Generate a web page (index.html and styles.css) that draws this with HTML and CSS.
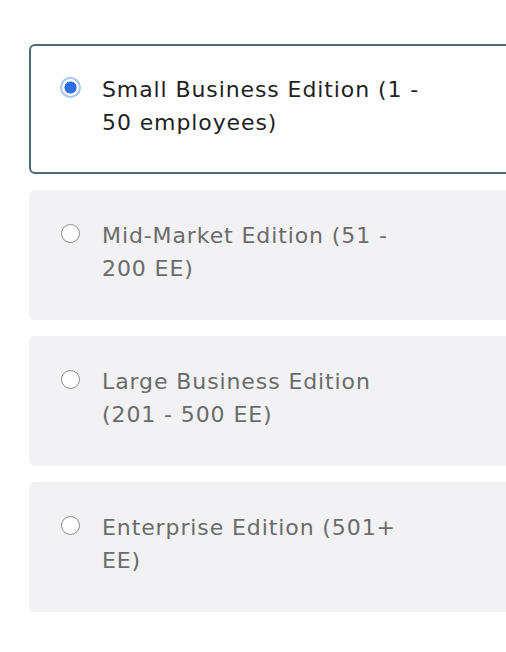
FILE: index.html
```html
<!DOCTYPE html>
<html lang="en">
<head>
<meta charset="utf-8">
<title>Edition</title>
<link rel="stylesheet" href="styles.css">
</head>
<body>
<div class="options">
  <label class="option option--selected">
    <input type="radio" name="edition" class="radio" checked>
    <span class="option__text">Small Business Edition (1 - 50 employees)</span>
  </label>
  <label class="option">
    <input type="radio" name="edition" class="radio">
    <span class="option__text">Mid-Market Edition (51 - 200 EE)</span>
  </label>
  <label class="option">
    <input type="radio" name="edition" class="radio">
    <span class="option__text">Large Business Edition (201 - 500 EE)</span>
  </label>
  <label class="option">
    <input type="radio" name="edition" class="radio">
    <span class="option__text">Enterprise Edition (501+ EE)</span>
  </label>
</div>
</body>
</html>
```

FILE: styles.css
```css
html, body {
  margin: 0;
  padding: 0;
  background: #ffffff;
  overflow: hidden;
}

body {
  font-family: "DejaVu Sans", "Open Sans", sans-serif;
}

.options {
  display: flex;
  flex-direction: column;
  gap: 16px;
  padding: 44px 0 0 29px;
}

.option {
  box-sizing: border-box;
  width: 620px;
  height: 130px;
  display: flex;
  align-items: flex-start;
  gap: 22px;
  padding: 27px 0 0 30px;
  border: 2px solid transparent;
  border-radius: 6px;
  background: #f2f2f4;
  cursor: pointer;
}

.option--selected {
  background: #ffffff;
  border-color: #4c6a7a;
}

.radio {
  appearance: none;
  -webkit-appearance: none;
  box-sizing: border-box;
  flex: none;
  width: 19px;
  height: 19px;
  margin: 5px 0 0 0;
  border: 1.6px solid #8d8d8d;
  border-radius: 50%;
  background: #ffffff;
}

.radio:checked {
  width: 21px;
  height: 21px;
  margin: 4px -1px 0 -1px;
  border: 2px solid #a8c5f5;
  background: radial-gradient(circle, #2f6fe6 0 5.8px, #ffffff 6.3px);
}

.option__text {
  max-width: 327px;
  font-size: 22px;
  line-height: 33px;
  letter-spacing: 0.9px;
  color: #6b6b6b;
}

.option--selected .option__text {
  color: #1f1f1f;
}
```
